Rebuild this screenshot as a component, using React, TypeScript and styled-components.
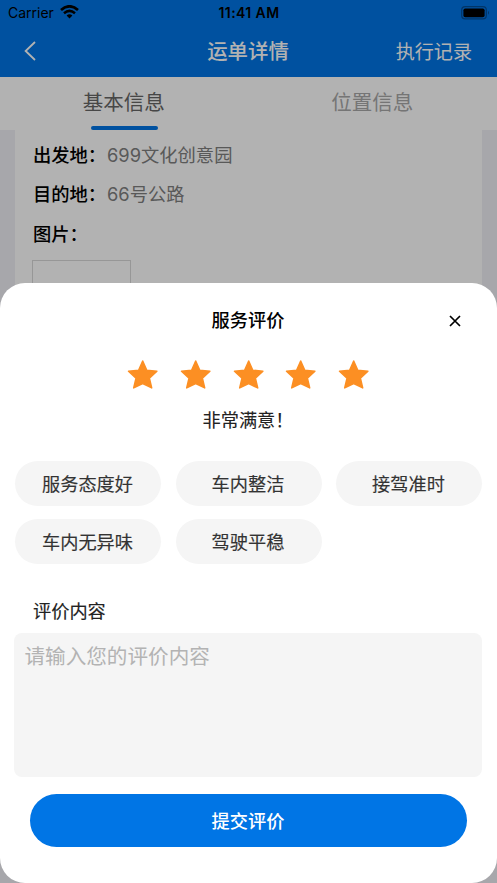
import React from "react";
import styled, { createGlobalStyle } from "styled-components";

const GlobalStyle = createGlobalStyle`
  * { box-sizing: border-box; }
  body { margin: 0; overflow: hidden; }
  button, textarea { font: inherit; border: 0; padding: 0; }
`;

const Screen = styled.div`
  position: relative;
  width: 497px;
  height: 883px;
  overflow: hidden;
  background: #f0f0f5;
  color: #000;
  font-family: Inter, "Noto Sans CJK SC", sans-serif;
`;

const Header = styled.header`
  height: 77px;
  background: #0075e5;
`;

const StatusBar = styled.div`
  display: grid;
  grid-template-columns: 1fr auto 1fr;
  align-items: center;
  height: 26px;
  padding: 0 7px 0 8px;
  font-size: 14px;
  line-height: 26px;
`;

const Carrier = styled.div`
  display: flex;
  align-items: center;
  gap: 6px;
  svg { margin-top: -2px; }
`;

const Clock = styled.div`
  font-size: 14px;
  font-weight: 600;
  letter-spacing: 0.4px;
`;

const Battery = styled.svg`
  justify-self: end;
  margin-top: -1px;
`;

const NavBar = styled.nav`
  display: grid;
  grid-template-columns: 1fr auto 1fr;
  align-items: center;
  height: 51px;
  padding: 0 25px 0 24px;
  color: #fff;
`;

const BackButton = styled.button`
  display: flex;
  margin-top: -2px;
  background: none;
  color: inherit;
`;

const NavTitle = styled.h1`
  margin: 0;
  font-size: 20.4px;
  line-height: 28px;
  font-weight: 500;
`;

const NavLink = styled.span`
  justify-self: end;
  font-size: 19.1px;
  line-height: 28px;
`;

const Tabs = styled.div`
  display: grid;
  grid-template-columns: 1fr 1fr;
  height: 53px;
  background: #fff;
`;

const Tab = styled.div<{ $active?: boolean }>`
  display: flex;
  flex-direction: column;
  align-items: center;
  justify-content: space-between;
  padding-top: 11px;
  font-size: 20.5px;
  line-height: 30px;
  color: ${(p) => (p.$active ? "#666" : "#a8a8a8")};
  &::after {
    content: "";
    width: 67px;
    height: 4px;
    border-radius: 2px;
    background: ${(p) => (p.$active ? "#0075e5" : "transparent")};
  }
`;

const TabLabel = styled.span`
  margin-right: 1px;
`;

const DetailCard = styled.section`
  height: 400px;
  margin: 0 15px;
  padding: 4px 18px;
  background: #fff;
`;

const DetailRow = styled.div`
  display: flex;
  height: 39.5px;
  align-items: center;
  font-size: 18.3px;
`;

const DetailLabel = styled.span`
  min-width: 74px;
  font-weight: 500;
`;

const DetailValue = styled.span`
  color: #808080;
`;

const ImageSlot = styled.div`
  width: 99px;
  height: 99px;
  margin: 7.5px 0 0 -1px;
  border: 1px solid #d8d8d8;
`;

const Overlay = styled.div`
  position: absolute;
  inset: 0;
  display: flex;
  align-items: flex-end;
  background: rgba(0, 0, 0, 0.3);
`;

const Sheet = styled.section`
  display: flex;
  flex-direction: column;
  width: 100%;
  height: 600px;
  padding: 0 15px;
  border-radius: 25px;
  background: #fff;
  font-size: 18.2px;
`;

const SheetHeader = styled.div`
  display: grid;
  grid-template-columns: 1fr auto 1fr;
  align-items: center;
  height: 74px;
  padding: 0 21px;
`;

const SheetTitle = styled.h2`
  grid-column: 2;
  margin: -3px 1px 0 0;
  font-size: inherit;
  font-weight: 500;
`;

const CloseButton = styled.button`
  display: flex;
  justify-self: end;
  margin-top: 2px;
  background: none;
`;

const Stars = styled.div`
  display: flex;
  justify-content: center;
  gap: 20.8px;
  height: 32px;
  margin-top: 2px;
`;

const RatingText = styled.p`
  margin: 15px 0 0;
  height: 28px;
  line-height: 28px;
  padding-right: 1px;
  text-align: center;
  color: #222;
  -webkit-text-stroke: 0.1px currentColor;
`;

const TagGrid = styled.div`
  display: grid;
  grid-template-columns: repeat(3, 146px);
  grid-auto-rows: 45px;
  justify-content: space-between;
  row-gap: 12.7px;
  width: 467px;
  margin-top: 27px;
`;

const Tag = styled.button`
  padding: 1px 1px 0 0;
  border-radius: 23px;
  background: #f5f5f5;
  color: #333;
  line-height: 44px;
  -webkit-text-stroke: 0.15px currentColor;
`;

const FieldLabel = styled.label`
  height: 28px;
  margin: 33px 0 8px 18px;
  line-height: 28px;
  color: #222;
  -webkit-text-stroke: 0.15px currentColor;
`;

const CommentBox = styled.textarea`
  display: block;
  width: 468px;
  height: 144px;
  margin-left: -1px;
  padding: 9px 10.5px;
  resize: none;
  border-radius: 8px;
  background: #f5f5f5;
  font-size: 20.6px;
  line-height: 30px;
  &::placeholder { color: #b3b3b3; opacity: 1; }
`;

const SubmitButton = styled.button`
  width: 437px;
  height: 53px;
  margin: 17px 0 0 15px;
  padding: 1px 1px 0 0;
  border-radius: 27px;
  background: #0075e5;
  color: #fff;
  font-weight: 500;
  line-height: 52px;
`;

const Star = () => (
  <svg width="32" height="32" viewBox="0 0 32 32">
    <path
      d="M15.7 2 L19.8 11.2 L29.9 12.2 L22.4 19.1 L24.7 28.9 L15.7 24.6 L6.7 28.9 L9 19.1 L1.5 12.2 L11.6 11.2 Z"
      fill="#fc8f23"
      stroke="#fc8f23"
      strokeWidth="1.5"
      strokeLinejoin="round"
    />
  </svg>
);

const WifiIcon = () => (
  <svg width="19" height="14" viewBox="0 0 19 14" fill="none" stroke="#000">
    <path d="M1 5 Q9.5 -2.4 18 5" strokeWidth="2.7" />
    <path d="M4 8.2 Q9.5 3.6 15 8.2" strokeWidth="2.5" />
    <path d="M6.6 10.5 Q9.5 8.2 12.4 10.5 L9.5 13.4 Z" fill="#000" stroke="none" />
  </svg>
);

const tags = ["服务态度好", "车内整洁", "接驾准时", "车内无异味", "驾驶平稳"];

export default function App() {
  return (
    <>
      <GlobalStyle />
      <Screen>
        <Header>
          <StatusBar>
            <Carrier>
              Carrier
              <WifiIcon />
            </Carrier>
            <Clock>11:41 AM</Clock>
            <Battery width="29" height="14" viewBox="0 0 29 14">
              <rect x="0.7" y="0.7" width="24.6" height="12.2" rx="3.4" fill="none" stroke="#004c96" strokeWidth="1.2" />
              <rect x="2.4" y="2.4" width="21.2" height="8.8" rx="1.8" />
              <path d="M27 4.8 Q29 6.8 27 8.8 Z" fill="#004c96" />
            </Battery>
          </StatusBar>
          <NavBar>
            <BackButton aria-label="返回">
              <svg width="12" height="20" viewBox="0 0 12 20" fill="none" stroke="currentColor" strokeWidth="1.8">
                <path d="M11 1 L1.6 10 L11 19" />
              </svg>
            </BackButton>
            <NavTitle>运单详情</NavTitle>
            <NavLink>执行记录</NavLink>
          </NavBar>
        </Header>
        <Tabs>
          <Tab $active>
            <TabLabel>基本信息</TabLabel>
          </Tab>
          <Tab>
            <TabLabel>位置信息</TabLabel>
          </Tab>
        </Tabs>
        <DetailCard>
          <DetailRow>
            <DetailLabel>出发地：</DetailLabel>
            <DetailValue>699文化创意园</DetailValue>
          </DetailRow>
          <DetailRow>
            <DetailLabel>目的地：</DetailLabel>
            <DetailValue>66号公路</DetailValue>
          </DetailRow>
          <DetailRow>
            <DetailLabel>图片：</DetailLabel>
          </DetailRow>
          <ImageSlot />
        </DetailCard>
        <Overlay>
          <Sheet>
            <SheetHeader>
              <SheetTitle>服务评价</SheetTitle>
              <CloseButton aria-label="关闭">
                <svg width="12" height="12" viewBox="0 0 12 12" fill="none" stroke="#000" strokeWidth="1.7">
                  <path d="M1 1 L11 11 M11 1 L1 11" />
                </svg>
              </CloseButton>
            </SheetHeader>
            <Stars>
              {[1, 2, 3, 4, 5].map((n) => (
                <Star key={n} />
              ))}
            </Stars>
            <RatingText>非常满意！</RatingText>
            <TagGrid>
              {tags.map((t) => (
                <Tag key={t}>{t}</Tag>
              ))}
            </TagGrid>
            <FieldLabel htmlFor="comment">评价内容</FieldLabel>
            <CommentBox id="comment" placeholder="请输入您的评价内容" />
            <SubmitButton>提交评价</SubmitButton>
          </Sheet>
        </Overlay>
      </Screen>
    </>
  );
}
